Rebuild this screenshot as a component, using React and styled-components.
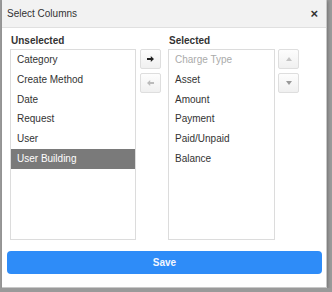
import React from 'react';
import styled, { createGlobalStyle } from 'styled-components';

const GlobalStyle = createGlobalStyle`
  html, body {
    margin: 0;
    padding: 0;
    background: #9a9a9a;
    font-family: "Liberation Sans", Arial, sans-serif;
  }
`;

const unselected = ['Category', 'Create Method', 'Date', 'Request', 'User', 'User Building'];
const selected = ['Charge Type', 'Asset', 'Amount', 'Payment', 'Paid/Unpaid', 'Balance'];

const ArrowRight = ({ color }) => (
    <svg width="7" height="6" viewBox="0 0 7 6">
        <path d="M0 2h3.8V0L7 3 3.8 6V4H0z" fill={color}/>
    </svg>
);

const ArrowLeft = ({ color }) => (
    <svg width="7" height="6" viewBox="0 0 7 6">
        <path d="M7 2H3.2V0L0 3l3.2 3V4H7z" fill={color}/>
    </svg>
);

const Triangle = ({ up, color }) => (
    <svg width="6" height="4" viewBox="0 0 6 4">
        <path d={up ? 'M0 4L3 0l3 4z' : 'M0 0h6L3 4z'} fill={color}/>
    </svg>
);

export default () => {
    return (
        <>
            <GlobalStyle/>
            <Dialog>
                <Header>
                    <Title>Select Columns</Title>
                    <Close>×</Close>
                </Header>
                <Body>
                    <Column $width={126}>
                        <Label>Unselected</Label>
                        <ListBox>
                            {unselected.map(item => (
                                <Item key={item} $active={item === 'User Building'}>{item}</Item>
                            ))}
                        </ListBox>
                    </Column>
                    <Buttons $left={4} $right={7}>
                        <SmallButton><ArrowRight color="#222"/></SmallButton>
                        <SmallButton><ArrowLeft color="#bbb"/></SmallButton>
                    </Buttons>
                    <Column $width={107}>
                        <Label>Selected</Label>
                        <ListBox>
                            {selected.map(item => (
                                <Item key={item} $disabled={item === 'Charge Type'}>{item}</Item>
                            ))}
                        </ListBox>
                    </Column>
                    <Buttons $left={3} $right={0}>
                        <SmallButton><Triangle up color="#c4c4c4"/></SmallButton>
                        <SmallButton><Triangle color="#999"/></SmallButton>
                    </Buttons>
                </Body>
                <Footer>
                    <SaveButton>Save</SaveButton>
                </Footer>
            </Dialog>
        </>
    )
};

const Dialog = styled.div`
  margin-left: 2px;
  width: 325px;
  height: 288px;
  background: #fff;
  box-sizing: border-box;
  border-right: 1px solid #c8c8c8;
  border-bottom: 1px solid #c8c8c8;
  box-shadow: 1px 1px 3px rgba(0, 0, 0, 0.25);
  display: flex;
  flex-direction: column;
`;

const Header = styled.div`
  height: 28px;
  box-sizing: border-box;
  background: #f2f2f2;
  border-bottom: 1px solid #e0e0e0;
  display: flex;
  align-items: center;
  justify-content: space-between;
  padding: 0 8px 0 5px;
`;

const Title = styled.div`
  font-size: 10px;
  color: #333;
`;

const Close = styled.div`
  font-size: 13px;
  font-weight: bold;
  color: #333;
  line-height: 1;
`;

const Body = styled.div`
  display: flex;
  padding: 7px 0 0 8px;
`;

const Column = styled.div`
  width: ${p => p.$width}px;
  display: flex;
  flex-direction: column;
`;

const Label = styled.div`
  font-size: 10px;
  font-weight: bold;
  color: #333;
  line-height: 12px;
  margin-bottom: 2px;
  padding-left: 1px;
`;

const ListBox = styled.div`
  height: 191px;
  box-sizing: border-box;
  border: 1px solid #dcdcdc;
  background: #fff;
`;

const Item = styled.div`
  height: 19.8px;
  line-height: 19.8px;
  padding-left: 6px;
  font-size: 10px;
  color: ${p => p.$active ? '#fff' : p.$disabled ? '#aaa' : '#333'};
  background: ${p => p.$active ? '#7a7a7a' : 'transparent'};
  white-space: nowrap;
`;

const Buttons = styled.div`
  display: flex;
  flex-direction: column;
  gap: 4px;
  margin: 14px ${p => p.$right}px 0 ${p => p.$left}px;
`;

const SmallButton = styled.div`
  width: 21px;
  height: 20px;
  box-sizing: border-box;
  border: 1px solid #dedede;
  border-radius: 2px;
  background: linear-gradient(#fdfdfd, #f0f0f0);
  display: flex;
  align-items: center;
  justify-content: center;
`;

const Footer = styled.div`
  padding: 11px 0 0 5px;
`;

const SaveButton = styled.div`
  width: 315px;
  height: 23px;
  border-radius: 4px;
  background: #2e8cf8;
  color: #f2f6ff;
  font-size: 10px;
  font-weight: bold;
  display: flex;
  align-items: center;
  justify-content: center;
`;
